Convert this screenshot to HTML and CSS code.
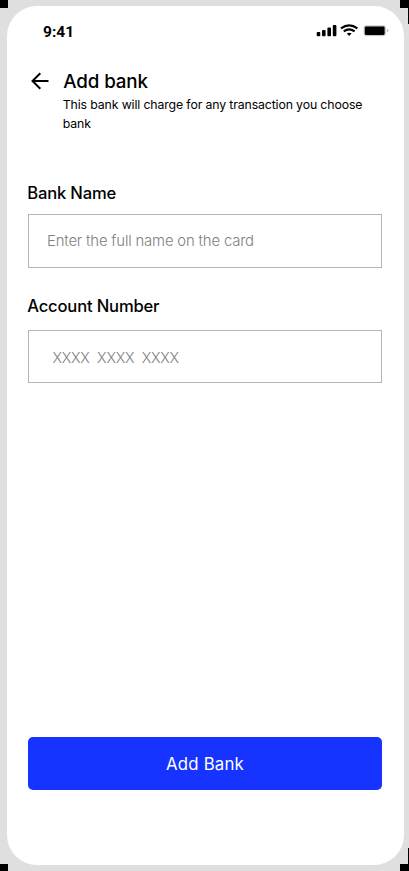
FILE: index.html
```html
<!DOCTYPE html>
<html lang="en">
<head>
<meta charset="utf-8">
<title>Add bank</title>
<link rel="stylesheet" href="styles.css">
</head>
<body>
<span class="corner corner-tl"></span><span class="corner corner-tr"></span>
<span class="corner corner-bl"></span><span class="corner corner-br"></span>
<span class="edge edge-top"></span><span class="edge edge-bottom"></span>
<main class="phone">
  <div class="status">
    <span class="time">9:41</span>
    <svg class="indicators" width="74" height="16" viewBox="0 0 74 16" aria-hidden="true">
      <g fill="#000">
        <rect x="1.7" y="9" width="3.6" height="4.3" rx="1"/>
        <rect x="7" y="7" width="3.6" height="6.3" rx="1"/>
        <rect x="12.4" y="4.5" width="3.6" height="8.8" rx="1"/>
        <rect x="17.8" y="2" width="3.6" height="11.3" rx="1"/>
        <path d="M31.8 10.6Q34.2 8.8 36.6 10.6L34.2 12.9Z"/>
      </g>
      <g fill="none" stroke="#000" stroke-width="2.2">
        <path d="M26 5.4Q34.2-.6 42.4 5.4"/>
        <path d="M28.8 8.4Q34.2 4.2 39.6 8.4"/>
      </g>
      <rect x="49" y="2.7" width="21.6" height="10" rx="2" fill="#ccc" stroke="#bbb" stroke-width=".6"/>
      <rect x="49.8" y="3.5" width="19.8" height="8.4" rx="1.3"/>
      <path d="M72.1 6v3.2q1.3-.5 1.3-1.6T72.1 6" fill="#aaa"/>
    </svg>
  </div>
  <header class="header">
    <svg class="back" width="18" height="18" viewBox="0 0 18 18" fill="none" stroke="#000" stroke-width="2" aria-hidden="true">
      <path d="M17.5 9H2M9.3 1.2L1.5 9L9.3 16.8"/>
    </svg>
    <div>
      <h1 class="title">Add bank</h1>
      <p class="subtitle">This bank will charge for any transaction you choose bank</p>
    </div>
  </header>
  <form class="form">
    <div class="field">
      <label class="label label-bank">Bank Name</label>
      <div class="input">Enter the full name on the card</div>
    </div>
    <div class="field">
      <label class="label">Account Number</label>
      <div class="input input-account">XXXX&nbsp; XXXX&nbsp; XXXX</div>
    </div>
    <button class="submit" type="button">Add Bank</button>
  </form>
</main>
</body>
</html>
```
FILE: styles.css
```css
* { box-sizing: border-box; margin: 0; }
body {
  height: 871px;
  padding: 6px 5.5px 6px 7px;
  background: #dfdfdf;
  font-family: Inter, sans-serif;
  color: #000;
  overflow: hidden;
}
.corner, .edge { position: absolute; background: #000; }
.corner { width: 8px; height: 8px; }
.corner-tl { left: 0; top: 0; }
.corner-tr { left: 400px; top: 0; width: 9px; }
.corner-bl { left: 0; top: 864px; }
.corner-br { left: 400px; top: 864px; width: 9px; }
.edge { left: 408px; width: 1px; height: 16px; }
.edge-top { top: 8px; }
.edge-bottom { top: 848px; }
.phone {
  position: relative;
  height: 859px;
  border-radius: 30px;
  background: #fff;
  padding: 16px 21.5px 75px 21px;
  display: flex;
  flex-direction: column;
}
.status {
  display: flex;
  justify-content: space-between;
  height: 18px;
  padding-left: 15px;
  margin-right: -7px;
}
.time { font: 700 15.5px/21px Roboto, sans-serif; }
.indicators { margin-top: 1px; }
.header { display: flex; margin-top: 30px; height: 108px; }
.back { margin: 2px 14.8px 0 2.5px; flex: none; }
.title { font-size: 18.8px; font-weight: 500; line-height: 23px; letter-spacing: -.14px; }
.subtitle { font-size: 12.3px; line-height: 19px; letter-spacing: -.13px; margin: 2px 0 0 -.5px; width: 310px; }
.form { flex: 1; display: flex; flex-direction: column; }
.field { height: 116px; }
.label { display: block; height: 36px; margin-left: -.8px; font-size: 16.6px; font-weight: 500; line-height: 24px; letter-spacing: -.17px; }
.label-bank { padding-top: 3px; }
.input {
  height: 54px;
  border: 1px solid #b5b5b5;
  padding-left: 18px;
  font-size: 14.9px;
  font-weight: 300;
  line-height: 53px;
  letter-spacing: -.18px;
  color: #808080;
}
.input-account { height: 53px; padding-left: 23.5px; font-size: 14.4px; letter-spacing: -.26px; }
.submit {
  height: 53px;
  margin-top: auto;
  border: 0;
  border-radius: 5px;
  background: #1733ff;
  color: #fff;
  font: 400 16.8px/53px Inter, sans-serif;
  letter-spacing: .2px;
}
```
